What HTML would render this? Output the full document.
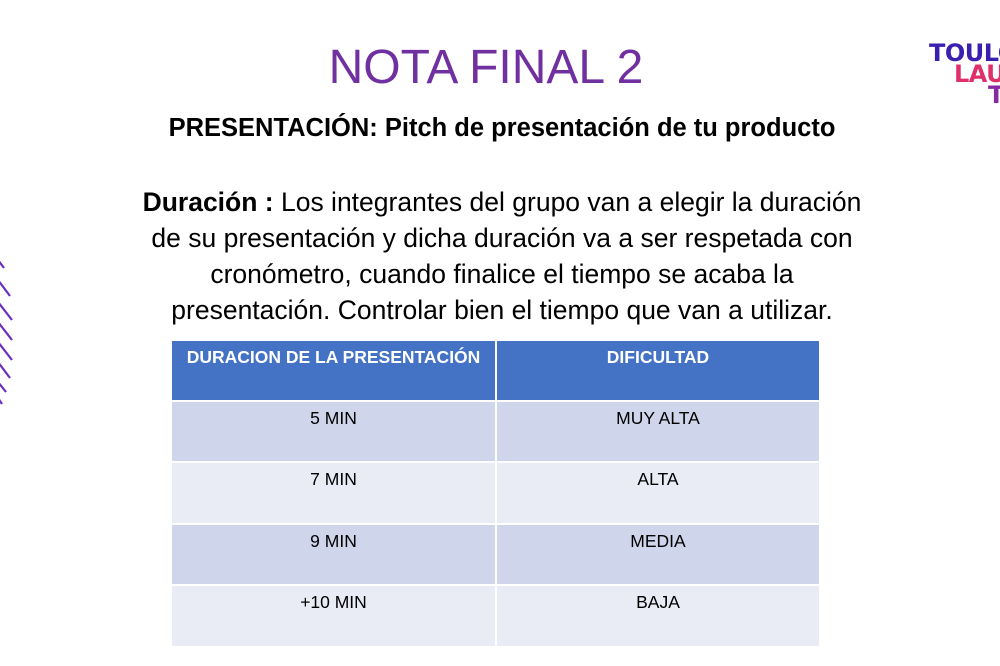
<!DOCTYPE html><html><head><style>
body{margin:0;width:1000px;height:666px;background:#fff;position:relative;overflow:hidden;font-family:"Liberation Sans",sans-serif}
.t{position:absolute;left:0;width:1000px;text-align:center}
table{position:absolute;left:170px;top:339px;width:651px;border-collapse:collapse}
td{border:2px solid #fff;vertical-align:top;text-align:center;font-size:17.5px;padding-top:6px;height:52px;box-sizing:border-box}
</style></head><body>
<div class="t" style="top:40px;font-size:48px;color:#7030a0;left:-14px">NOTA FINAL 2</div>
<div class="t" style="top:114px;font-size:25.5px;font-weight:bold;left:2px">PRESENTACIÓN: Pitch de presentación de tu producto</div>
<div class="t" style="top:184px;font-size:26.5px;line-height:36px;left:2px"><b>Duración :</b> Los integrantes del grupo van a elegir la duración<br>de su presentación y dicha duración va a ser respetada con<br>cronómetro, cuando finalice el tiempo se acaba la<br>presentación. Controlar bien el tiempo que van a utilizar.</div>
<table>
<tr style="background:#4472c4;color:#fff;font-weight:bold"><td style="width:325px;height:61px">DURACION DE LA PRESENTACIÓN</td><td>DIFICULTAD</td></tr>
<tr style="background:#cfd5ea"><td style="height:61px">5 MIN</td><td>MUY ALTA</td></tr>
<tr style="background:#e9ebf5"><td style="height:62px">7 MIN</td><td>ALTA</td></tr>
<tr style="background:#cfd5ea"><td style="height:61px">9 MIN</td><td>MEDIA</td></tr>
<tr style="background:#e9ebf5"><td style="height:62px">+10 MIN</td><td>BAJA</td></tr>
</table>
<svg style="position:absolute;left:0;top:250px" width="20" height="160"><g stroke="#6a2fc0" stroke-width="2.2">
<line x1="-2" y1="10" x2="4" y2="18"/><line x1="-2" y1="30" x2="10" y2="46"/><line x1="-2" y1="52" x2="12" y2="70"/><line x1="-2" y1="72" x2="12" y2="90"/><line x1="-2" y1="92" x2="12" y2="110"/><line x1="-2" y1="112" x2="10" y2="128"/><line x1="-2" y1="132" x2="6" y2="142"/><line x1="-2" y1="148" x2="2" y2="154"/></g></svg>
<div style="position:absolute;left:929px;top:43px;font-weight:bold;font-size:24px;line-height:21px;font-family:'DejaVu Sans',sans-serif;letter-spacing:-0.5px">
<div style="color:#3a1fb0">TOULO</div><div style="color:#e0306a;padding-left:25px">LAU</div><div style="color:#8a2aa0;padding-left:59px">T</div></div>
</body></html>
